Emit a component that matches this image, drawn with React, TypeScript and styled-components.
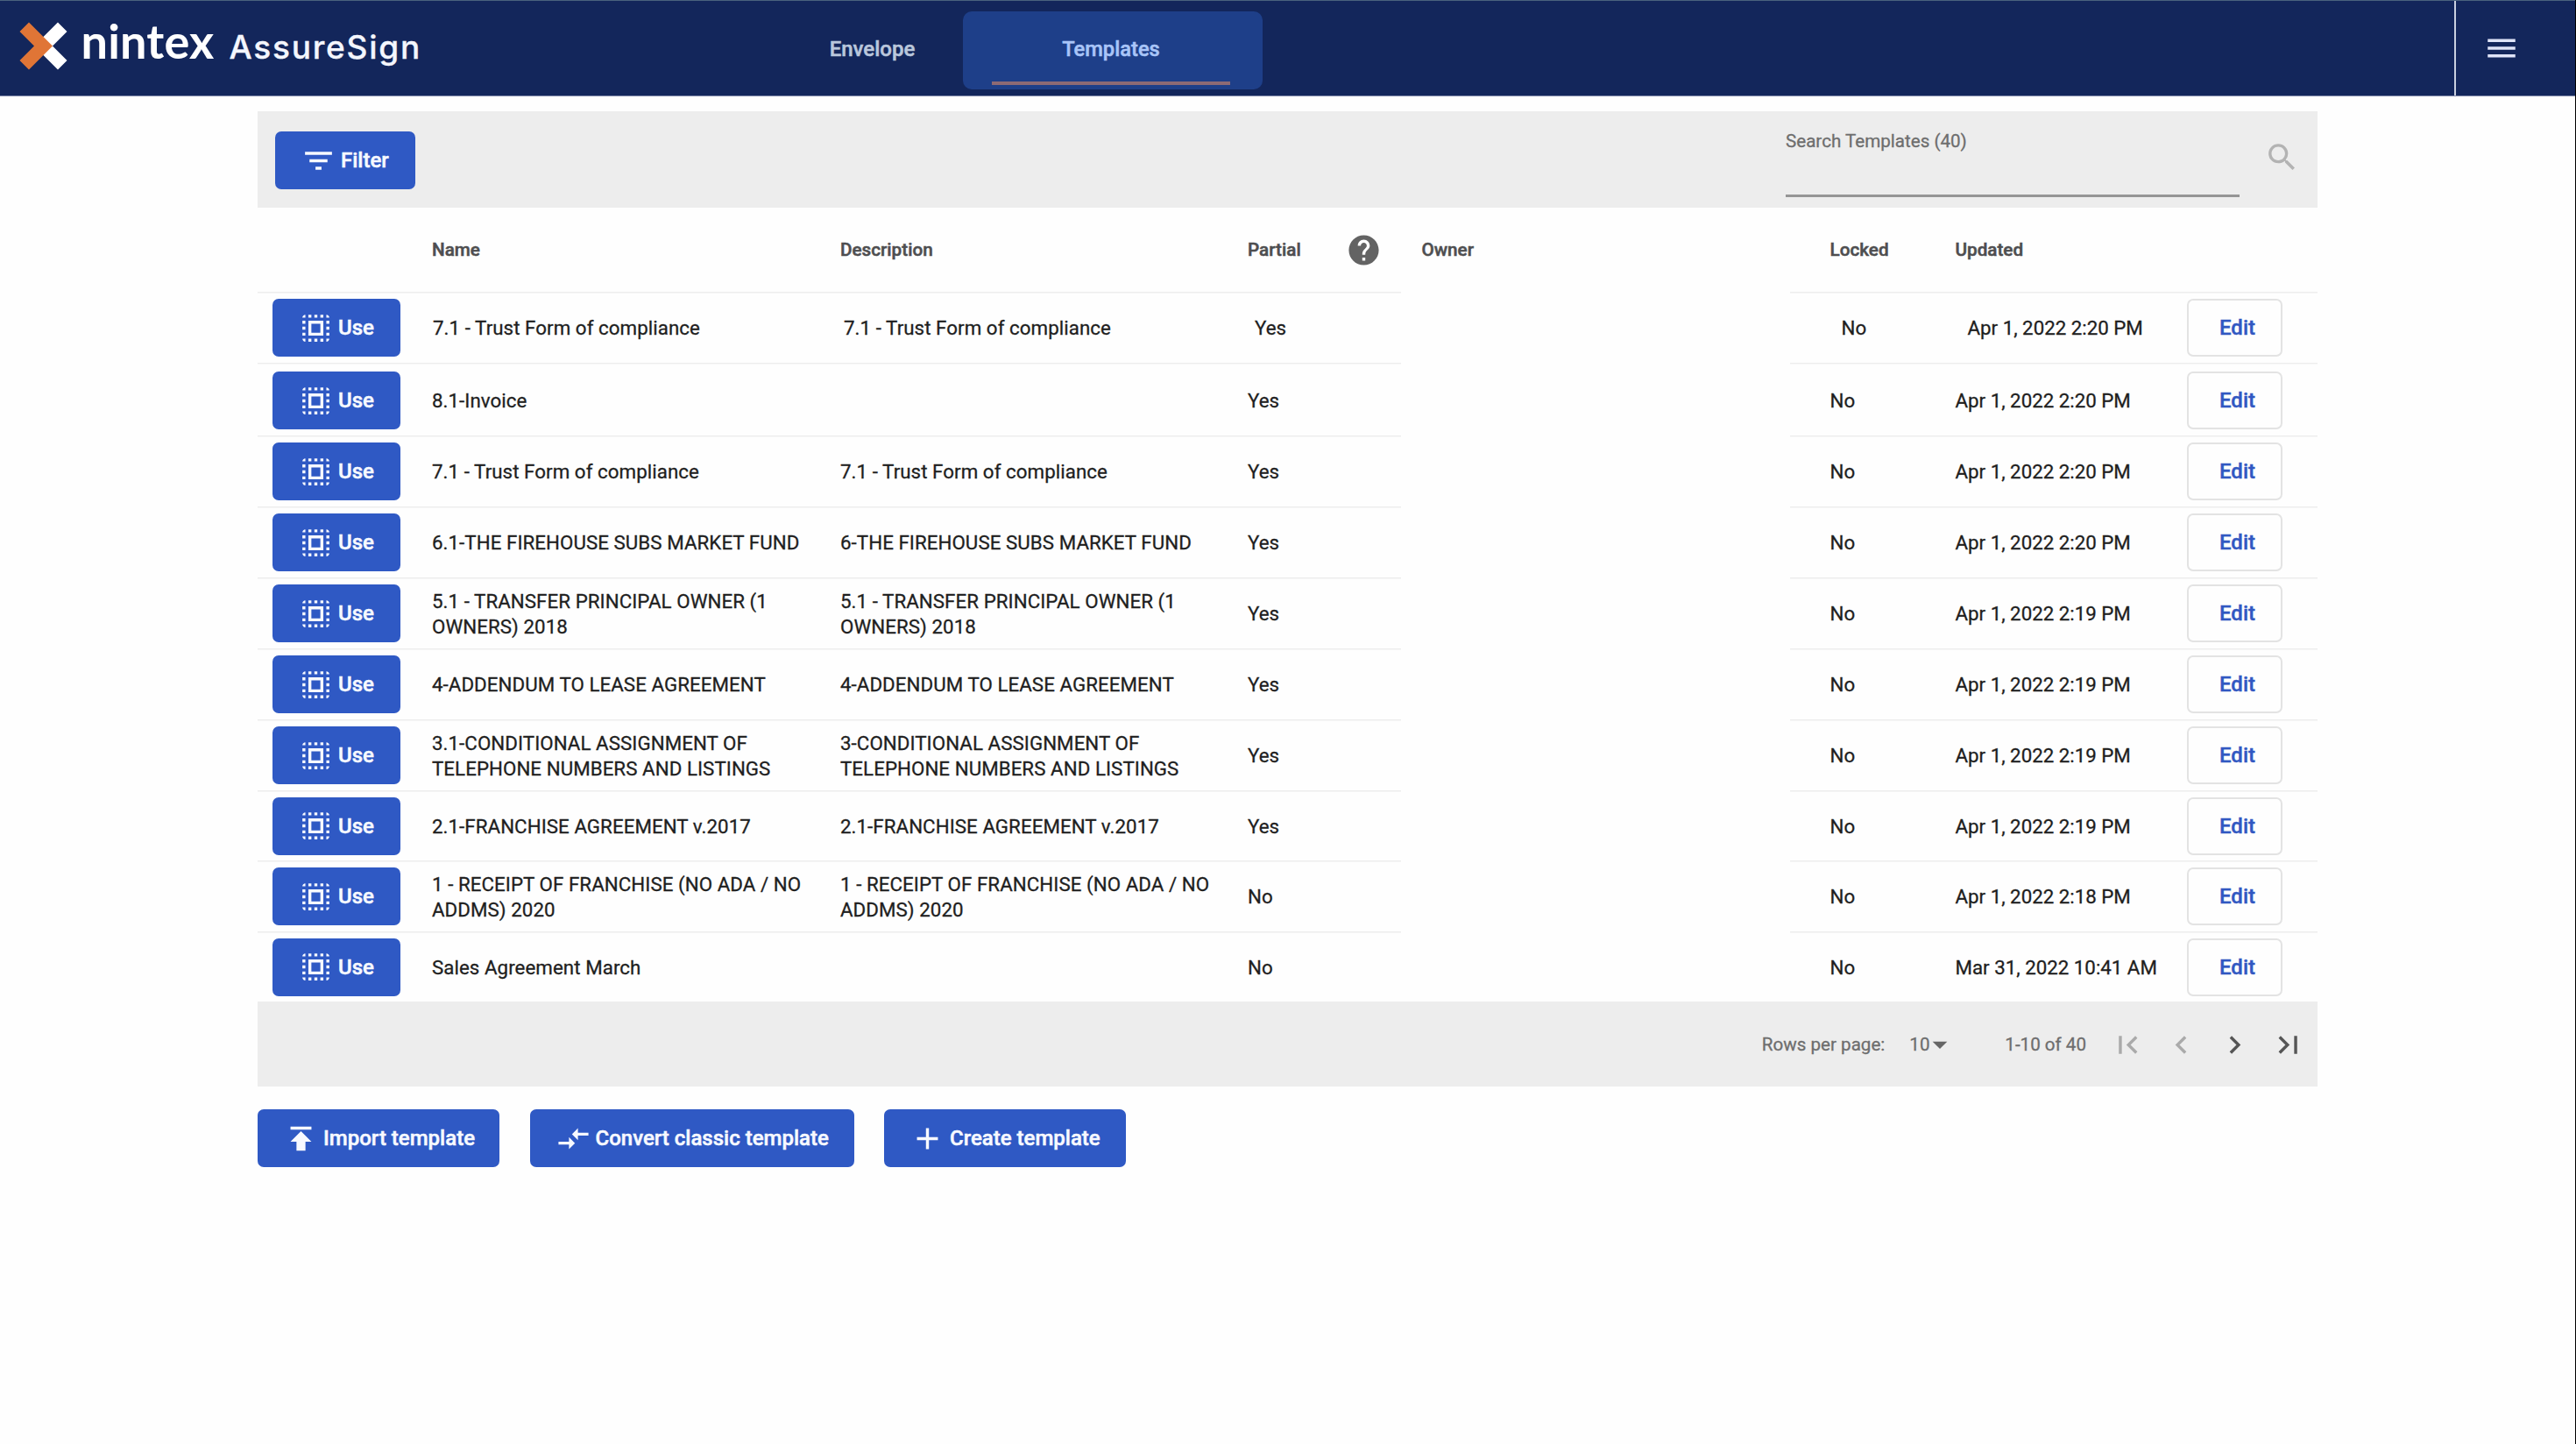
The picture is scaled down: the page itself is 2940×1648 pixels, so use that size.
import React from "react";
import styled, { createGlobalStyle } from "styled-components";
import {
  MdAdd,
  MdArrowDropDown,
  MdChevronLeft,
  MdChevronRight,
  MdCompareArrows,
  MdFilterList,
  MdFirstPage,
  MdHelp,
  MdLastPage,
  MdMenu,
  MdPublish,
  MdSearch,
  MdSelectAll,
} from "react-icons/md";

const GlobalStyle = createGlobalStyle`
  * { box-sizing: border-box; }
  body {
    margin: 0;
    background: #fefefe;
    color: #1f1f1f;
    font-family: Roboto, "Liberation Sans", sans-serif;
  }
  svg path[fill="none"] { stroke: none; }
`;

const Page = styled.div`
  min-height: 1648px;
  border-right: 1px solid #000;
`;

const TopBar = styled.header`
  display: grid;
  grid-template-columns: 917px 1fr 138px;
  height: 110px;
  background: #13265b;
  border-top: 1px solid #4a627e;
  border-bottom: 1px solid #8088a9;
`;

const Brand = styled.div`
  display: flex;
  align-items: baseline;
  padding-left: 22px;
`;

const Mark = styled.svg`
  width: 55px;
  height: 55px;
  align-self: flex-start;
  margin-top: 24px;
`;

const Wordmark = styled.span`
  margin-left: 15.5px;
  font: 700 54px/1 Lato, sans-serif;
  letter-spacing: 0.2px;
  padding-top: 19px;
  color: #fff;
`;

const Product = styled.span`
  margin-left: 17px;
  font: 500 37px/1 Inter, sans-serif;
  letter-spacing: 1.75px;
  color: #f4f6fd;
  -webkit-text-stroke: 0.3px currentColor;
`;

const Nav = styled.nav`
  display: flex;
  align-items: center;
  gap: 25px;
`;

const NavItem = styled.a<{ $active?: boolean }>`
  display: flex;
  flex-direction: column;
  align-items: center;
  justify-content: flex-start;
  width: ${(p) => (p.$active ? 342 : 157)}px;
  height: 89px;
  margin-top: 4px;
  padding: 29px ${(p) => (p.$active ? 4 : 0)}px 0 0;
  border-radius: 10px;
  background: ${(p) => (p.$active ? "#1e3f89" : "transparent")};
  color: ${(p) => (p.$active ? "#a9c5f8" : "#bac7dc")};
  font-size: ${(p) => (p.$active ? 23.7 : 24)}px;
  font-weight: 500;
  line-height: 28px;
  -webkit-text-stroke: 0.5px currentColor;
`;

const ActiveLine = styled.span`
  width: 272px;
  height: 4px;
  margin-top: 23px;
  background: #8d6a74;
`;

const MenuArea = styled.div`
  display: flex;
  align-items: center;
  padding-left: 31px;
  border-left: 2px solid #c9cfdf;
  color: #dfe4f8;
  font-size: 42px;
`;

const Content = styled.main`
  width: 2351px;
  margin: 17px 0 0 294px;
`;

const Toolbar = styled.div`
  display: flex;
  align-items: flex-start;
  height: 110px;
  padding: 23px 20px 0;
  background: #ededed;
`;

const Button = styled.button<{ $width: number }>`
  display: flex;
  align-items: center;
  gap: 5px;
  width: ${(p) => p.$width}px;
  height: 66px;
  padding: 0 0 0 29px;
  border: 0;
  border-radius: 7px;
  background: #2f59c4;
  color: #f7f9ff;
  font: 500 24px/28px Roboto, sans-serif;
  white-space: nowrap;
  -webkit-text-stroke: 0.5px currentColor;

  svg {
    flex: none;
    font-size: 41px;
  }
`;

const SearchArea = styled.div`
  display: flex;
  align-items: flex-start;
  gap: 28px;
  margin: -11px 0 0 auto;
  color: #b3b3b3;

  svg {
    margin-top: 20px;
    font-size: 41px;
  }
`;

const SearchField = styled.label`
  width: 518px;
  height: 86px;
  padding-top: 10px;
  border-bottom: 3px solid #959595;
  color: #6e6e6e;
  font-size: 20.6px;
  line-height: 24px;
  -webkit-text-stroke: 0.3px currentColor;
`;

const Row = styled.div<{ $height: number; $head?: boolean }>`
  display: grid;
  grid-template-columns: 1305px 444px 602px;
  height: ${(p) => p.$height}px;
  font-size: ${(p) => (p.$head ? 20.7 : 22.3)}px;
  font-weight: ${(p) => (p.$head ? 500 : 400)};
  line-height: 29px;
  color: ${(p) => (p.$head ? "#4e4e50" : "#1f1f1f")};
  -webkit-text-stroke: ${(p) => (p.$head ? 0.5 : 0.3)}px currentColor;
`;

const Segment = styled.div<{ $columns: string; $line: boolean; $drop?: number }>`
  display: grid;
  grid-template-columns: ${(p) => p.$columns};
  align-items: center;
  padding-top: ${(p) => p.$drop ?? 0}px;
  border-top: ${(p) => (p.$line ? "1px solid #ededed" : "0")};
  box-shadow: ${(p) => (p.$line ? "inset 0 1px 0 #f6f6f6" : "none")};
`;

const Cell = styled.div<{ $indent?: number }>`
  padding-left: ${(p) => p.$indent ?? 0}px;
  padding-top: 1px;
`;

const TextCell = styled(Cell)`
  padding-right: 28px;
  letter-spacing: 0.06px;
`;

const PartialHead = styled.div`
  display: flex;
  align-items: center;
  justify-content: space-between;
  padding-right: 22px;

  svg {
    color: #636363;
    font-size: 41px;
  }
`;

const OwnerCell = styled.div`
  align-self: center;
  padding-left: 23.5px;
`;

const UseCell = styled.div`
  padding-left: 17px;
`;

const EditButton = styled.button`
  width: 109px;
  height: 66px;
  padding: 0 0 0 6px;
  border: 2px solid #e3e3e3;
  border-radius: 7px;
  background: #fefefe;
  color: #3158c2;
  font: 500 24px/28px Roboto, sans-serif;
  -webkit-text-stroke: 0.4px currentColor;
`;

const Footer = styled.div`
  display: flex;
  align-items: center;
  justify-content: flex-end;
  height: 97px;
  padding-right: 13px;
  background: #ededed;
  color: #6e6e6e;
  font-size: 20.6px;
  -webkit-text-stroke: 0.3px currentColor;
`;

const PageSize = styled.span`
  display: flex;
  align-items: center;
  width: 109px;
  margin-left: 28px;

  svg {
    margin-left: -8px;
    color: #666;
    font-size: 40px;
  }
`;

const PageButtons = styled.div`
  display: flex;
  gap: 20px;
  margin-left: 27px;
  padding-top: 2px;
  font-size: 41px;
`;

const PageIcon = styled.span<{ $disabled?: boolean }>`
  display: flex;
  color: ${(p) => (p.$disabled ? "#aaaaaa" : "#555555")};
`;

const Actions = styled.div`
  display: flex;
  gap: 34.5px;
  margin-top: 26px;
`;

const LEFT = "199px 466px 465px 175px";
const RIGHT = "45px 143.5px 264.5px 149px";

type Template = {
  name: string;
  description: string;
  partial: string;
  updated: string;
  height: number;
  shifted?: boolean;
};

const templates: Template[] = [
  { name: "7.1 - Trust Form of compliance", description: "7.1 - Trust Form of compliance", partial: "Yes", updated: "Apr 1, 2022 2:20 PM", height: 81, shifted: true },
  { name: "8.1-Invoice", description: "", partial: "Yes", updated: "Apr 1, 2022 2:20 PM", height: 83 },
  { name: "7.1 - Trust Form of compliance", description: "7.1 - Trust Form of compliance", partial: "Yes", updated: "Apr 1, 2022 2:20 PM", height: 81 },
  { name: "6.1-THE FIREHOUSE SUBS MARKET FUND", description: "6-THE FIREHOUSE SUBS MARKET FUND", partial: "Yes", updated: "Apr 1, 2022 2:20 PM", height: 81 },
  { name: "5.1 - TRANSFER PRINCIPAL OWNER (1 OWNERS) 2018", description: "5.1 - TRANSFER PRINCIPAL OWNER (1 OWNERS) 2018", partial: "Yes", updated: "Apr 1, 2022 2:19 PM", height: 81 },
  { name: "4-ADDENDUM TO LEASE AGREEMENT", description: "4-ADDENDUM TO LEASE AGREEMENT", partial: "Yes", updated: "Apr 1, 2022 2:19 PM", height: 81 },
  { name: "3.1-CONDITIONAL ASSIGNMENT OF TELEPHONE NUMBERS AND LISTINGS", description: "3-CONDITIONAL ASSIGNMENT OF TELEPHONE NUMBERS AND LISTINGS", partial: "Yes", updated: "Apr 1, 2022 2:19 PM", height: 81 },
  { name: "2.1-FRANCHISE AGREEMENT v.2017", description: "2.1-FRANCHISE AGREEMENT v.2017", partial: "Yes", updated: "Apr 1, 2022 2:19 PM", height: 80 },
  { name: "1 - RECEIPT OF FRANCHISE (NO ADA / NO ADDMS) 2020", description: "1 - RECEIPT OF FRANCHISE (NO ADA / NO ADDMS) 2020", partial: "No", updated: "Apr 1, 2022 2:18 PM", height: 81 },
  { name: "Sales Agreement March", description: "", partial: "No", updated: "Mar 31, 2022 10:41 AM", height: 80 },
];

function TemplateRow({ item }: { item: Template }) {
  const s = item.shifted;
  const drop = item.height > 81 ? 2 : 0;
  return (
    <Row $height={item.height}>
      <Segment $columns={LEFT} $line $drop={drop}>
        <UseCell>
          <Button $width={146}>
            <MdSelectAll />
            Use
          </Button>
        </UseCell>
        <TextCell $indent={s ? 1 : 0}>{item.name}</TextCell>
        <TextCell $indent={s ? 4 : 0}>{item.description}</TextCell>
        <Cell $indent={s ? 8 : 0}>{item.partial}</Cell>
      </Segment>
      <div />
      <Segment $columns={RIGHT} $line $drop={drop}>
        <span />
        <Cell $indent={s ? 13.5 : 0.5}>No</Cell>
        <Cell $indent={s ? 14 : 0}>{item.updated}</Cell>
        <EditButton>Edit</EditButton>
      </Segment>
    </Row>
  );
}

export default function App() {
  return (
    <Page>
      <GlobalStyle />
      <TopBar>
        <Brand>
          <Mark viewBox="0 0 55 55">
            <path d="M44 .5 54.5 11 38 27.5 54.5 44 44 54.5 27 37.5V17.5Z" fill="#fff" />
            <path d="M11 .5 38 27.5 11 54.5.5 44 17 27.5.5 11Z" fill="#e07536" />
          </Mark>
          <Wordmark>nintex</Wordmark>
          <Product>AssureSign</Product>
        </Brand>
        <Nav>
          <NavItem>Envelope</NavItem>
          <NavItem $active>
            Templates
            <ActiveLine />
          </NavItem>
        </Nav>
        <MenuArea>
          <MdMenu />
        </MenuArea>
      </TopBar>
      <Content>
        <Toolbar>
          <Button $width={160}>
            <MdFilterList />
            Filter
          </Button>
          <SearchArea>
            <SearchField>Search Templates (40)</SearchField>
            <MdSearch />
          </SearchArea>
        </Toolbar>
        <Row $height={96} $head>
          <Segment $columns={LEFT} $line={false}>
            <span />
            <Cell>Name</Cell>
            <Cell>Description</Cell>
            <PartialHead>
              Partial
              <MdHelp />
            </PartialHead>
          </Segment>
          <OwnerCell>Owner</OwnerCell>
          <Segment $columns={RIGHT} $line={false}>
            <span />
            <Cell $indent={0.5}>Locked</Cell>
            <Cell>Updated</Cell>
          </Segment>
        </Row>
        {templates.map((item, i) => (
          <TemplateRow key={i} item={item} />
        ))}
        <Footer>
          Rows per page:
          <PageSize>
            10
            <MdArrowDropDown />
          </PageSize>
          1-10 of 40
          <PageButtons>
            <PageIcon $disabled><MdFirstPage /></PageIcon>
            <PageIcon $disabled><MdChevronLeft /></PageIcon>
            <PageIcon><MdChevronRight /></PageIcon>
            <PageIcon><MdLastPage /></PageIcon>
          </PageButtons>
        </Footer>
        <Actions>
          <Button $width={276}>
            <MdPublish />
            Import template
          </Button>
          <Button $width={370}>
            <MdCompareArrows />
            Convert classic template
          </Button>
          <Button $width={276}>
            <MdAdd />
            Create template
          </Button>
        </Actions>
      </Content>
    </Page>
  );
}
